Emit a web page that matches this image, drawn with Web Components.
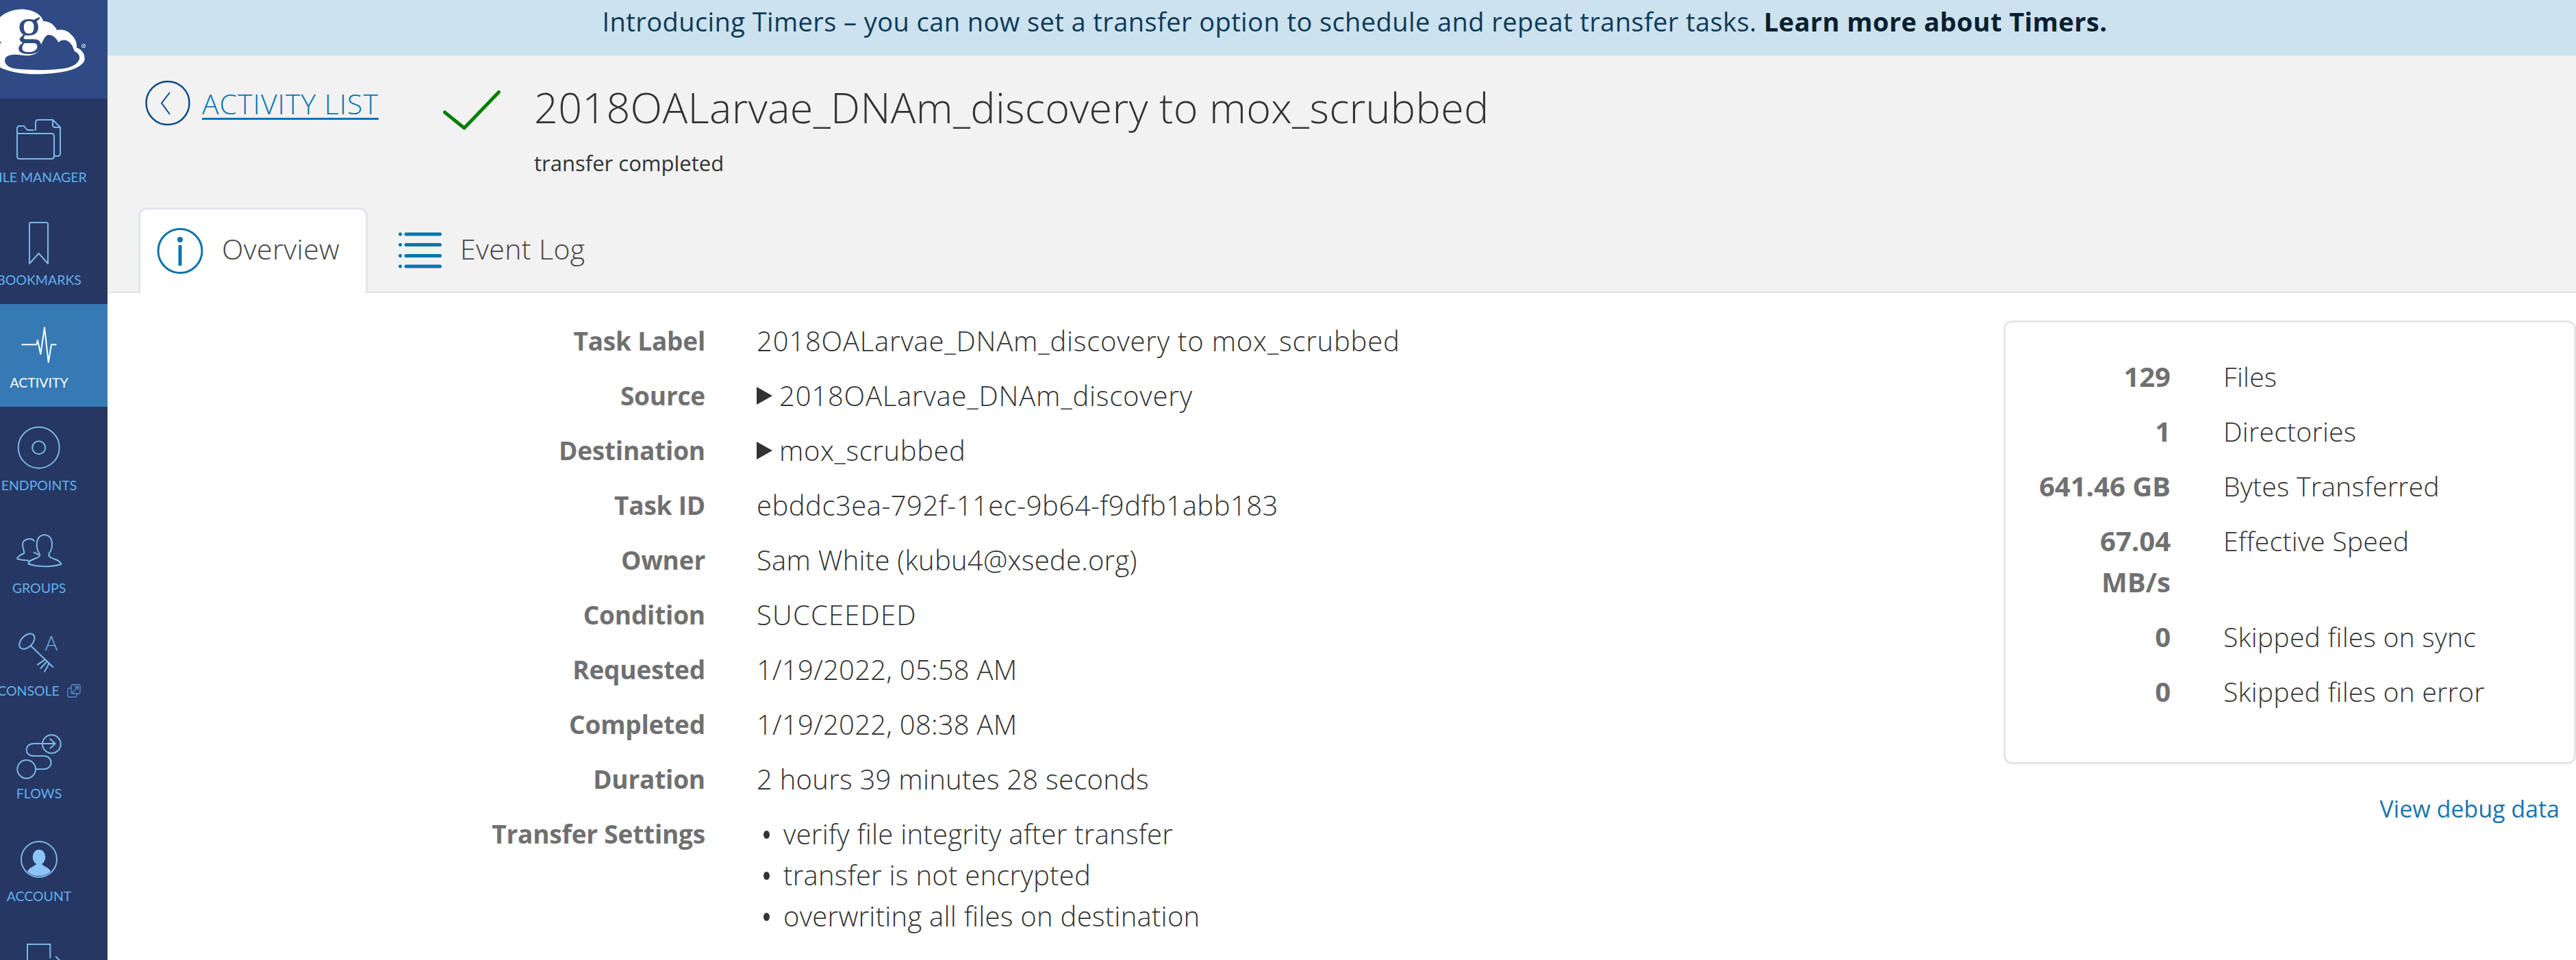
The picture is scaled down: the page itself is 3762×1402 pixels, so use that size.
<!DOCTYPE html>
<html lang="en">
<head>
<meta charset="utf-8">
<title>Activity</title>
<style>
  html, body { margin: 0; height: 100%; overflow: hidden; background: #fff; }
  body { font: 300 40px/60px "Open Sans", "Liberation Sans", sans-serif; letter-spacing: .25px; color: #333; }
  svg.ic { display: block; width: 80px; height: 80px; overflow: visible; fill: none; stroke: #7db8e8; stroke-width: 2; stroke-linecap: round; stroke-linejoin: round; }
  svg.ic .z { stroke-width: 6; }
</style>
</head>
<body>
<app-shell>
  <side-nav slot="nav">
    <nav-item label="FILE MANAGER">
      <svg class="ic" slot="icon" viewBox="0 0 80 80"><path d="M62,64 V35 q0,-4 -4,-4 H8 V64 q0,4 4,4 H58 q4,0 4,-4 M8,31 V24 q0,-4 4,-4 H18 l4,5 q1,1 3,1 H32 M35,26 V15 q0,-4 4,-4 H60 L71,22 V60 q0,4 -4,4 H62 M60,11 v7 q0,4 4,4 h7"/></svg>
    </nav-item>
    <nav-item label="BOOKMARKS">
      <svg class="ic" slot="icon" viewBox="0 0 80 80"><path d="M26,13 q0,-2 2,-2 h23 q2,0 2,2 V71 L39.5,56 L26,71 Z"/></svg>
    </nav-item>
    <nav-item label="ACTIVITY" active>
      <svg class="ic" slot="icon" viewBox="0 0 80 80" style="stroke:#fff"><path d="M15.3,39.3 H36.3 L38,33 L42.3,53 L48,14.3 L53.7,65 L58,39.3 H64.7"/></svg>
    </nav-item>
    <nav-item label="ENDPOINTS">
      <svg class="ic" slot="icon" viewBox="0 0 80 80"><circle cx="39.7" cy="39.7" r="30"/><circle cx="39.7" cy="39.7" r="9.5"/></svg>
    </nav-item>
    <nav-item label="GROUPS">
      <svg class="ic" slot="icon" viewBox="0 0 80 80"><g class="z" transform="translate(-17,-304) scale(.3333)"><path d="M172,1045 C155,1020 155,965 195,963 C235,965 235,1020 215,1045 C210,1060 225,1065 245,1072 C262,1078 265,1085 268,1092 C230,1105 160,1105 123,1090 C128,1075 145,1070 160,1065 C175,1060 178,1052 172,1045 Z"/><path d="M128,1076 C105,1075 88,1073 75,1068 C80,1055 90,1050 105,1045 C110,1035 95,1020 100,1000 C105,980 140,975 150,990 M148,1040 L168,1050"/></g></svg>
    </nav-item>
    <nav-item label="CONSOLE" external>
      <svg class="ic" slot="icon" viewBox="0 0 80 80"><g class="z" transform="translate(-17,-14) scale(.3333)"><ellipse cx="118" cy="110" rx="40" ry="25" transform="rotate(-45 118 110)"/><path d="M135,130 L232,222 M197,190 L165,212 M206,198 L178,228 M215,207 L195,243"/><text x="225" y="150" text-anchor="middle" font-family="Lato, sans-serif" font-weight="300" font-size="86" fill="#7db8e8" stroke="none">A</text></g></svg>
    </nav-item>
    <nav-item label="FLOWS">
      <svg class="ic" slot="icon" viewBox="0 0 80 80"><g class="z" transform="translate(-17,-124) scale(.3333)"><circle cx="226" cy="440" r="40"/><circle cx="116" cy="550" r="40"/><path d="M242,438 H148 C105,438 105,492 148,492 H190 C235,492 235,550 190,550 H158 M220,418 L242,438 L220,458"/></g></svg>
    </nav-item>
    <nav-item label="ACCOUNT">
      <svg class="ic" slot="icon" viewBox="0 0 80 80"><g class="z" transform="translate(-17,-274) scale(.3333)"><circle cx="171" cy="945" r="78"/><ellipse cx="171" cy="935" rx="28" ry="33" fill="#8cc4f5" stroke="none"/><path d="M120,999 C128,978 150,978 158,966 H184 C192,978 214,978 222,999 A78,78 0 0 1 120,999 Z" fill="#8cc4f5" stroke="none"/></g></svg>
    </nav-item>
    <nav-item>
      <svg class="ic" slot="icon" viewBox="0 0 80 80"><g class="z" transform="translate(-17,-24) scale(.3333)"><path d="M220,176 V117 H120 V300 H220 V250 M245,172 L290,215 L245,260 M290,215 H170"/></g></svg>
    </nav-item>
  </side-nav>

  <notice-banner>Introducing Timers – you can now set a transfer option to schedule and repeat transfer tasks. <b>Learn more about Timers.</b></notice-banner>

  <task-header>
    <span slot="back">ACTIVITY LIST</span>
    <span slot="title">2018OALarvae_DNAm_discovery to mox_scrubbed</span>
    <span slot="status">transfer completed</span>
    <tab-item slot="tabs" active>
      <svg slot="icon" width="68" height="67" viewBox="0 0 68 67" fill="none" stroke="#0a75ad" stroke-width="3"><circle cx="34" cy="33.500" r="32"/><path d="M34,25 V55" stroke-width="5"/><circle cx="34" cy="17" r="4" fill="#0a75ad" stroke="none"/></svg>
      Overview
    </tab-item>
    <tab-item slot="tabs">
      <svg slot="icon" width="63" height="54" viewBox="0 0 63 54" fill="none" stroke="#0a75ad" stroke-width="5" stroke-linecap="round"><path d="M11,3 H60.5 M11,18.500 H60.500 M11,34.500 H60.500 M11,50 H60.500"/><path d="M2.500,3 h.1 M2.500,18.500 h.1 M2.500,34.500 h.1 M2.500,50 h.1"/></svg>
      Event Log
    </tab-item>
  </task-header>

  <task-overview>
    <detail-row label="Task Label" style="letter-spacing:.8px">2018OALarvae_DNAm_discovery to mox_scrubbed</detail-row>
    <detail-row label="Source" style="letter-spacing:.8px"><endpoint-link>2018OALarvae_DNAm_discovery</endpoint-link></detail-row>
    <detail-row label="Destination" style="letter-spacing:.6px"><endpoint-link>mox_scrubbed</endpoint-link></detail-row>
    <detail-row label="Task ID" style="letter-spacing:.5px">ebddc3ea-792f-11ec-9b64-f9dfb1abb183</detail-row>
    <detail-row label="Owner">Sam White (kubu4@xsede.org)</detail-row>
    <detail-row label="Condition" style="letter-spacing:1.2px">SUCCEEDED</detail-row>
    <detail-row label="Requested">1/19/2022, 05:58 AM</detail-row>
    <detail-row label="Completed">1/19/2022, 08:38 AM</detail-row>
    <detail-row label="Duration">2 hours 39 minutes 28 seconds</detail-row>
    <detail-row label="Transfer Settings">
      <bullet-item>verify file integrity after transfer</bullet-item>
      <bullet-item>transfer is not encrypted</bullet-item>
      <bullet-item>overwriting all files on destination</bullet-item>
    </detail-row>

    <stats-card slot="stats">
      <stat-row value="129">Files</stat-row>
      <stat-row value="1">Directories</stat-row>
      <stat-row value="641.46 GB">Bytes Transferred</stat-row>
      <stat-row value="67.04 MB/s">Effective Speed</stat-row>
      <stat-row value="0">Skipped files on sync</stat-row>
      <stat-row value="0">Skipped files on error</stat-row>
    </stats-card>
    <span slot="debug">View debug data</span>
  </task-overview>
</app-shell>

<script>
const shadow = (el, html) => {
    el.attachShadow({ mode: 'open' }).innerHTML = html;
};

class AppShell extends HTMLElement {
    constructor() {
        super();
        shadow(this, `
<style>
  :host { display: flex; height: 100vh; overflow: hidden; }
  .main { flex: 1; min-width: 0; display: flex; flex-direction: column; }
</style>
<slot name="nav"></slot>
<div class="main"><slot></slot></div>`);
    }
}

class SideNav extends HTMLElement {
    constructor() {
        super();
        shadow(this, `
<style>
  :host { display: block; flex: 0 0 157px; background: #263763; overflow: hidden; }
  .logo { height: 144px; background: #2f4a85; }
  svg { display: block; overflow: hidden; }
</style>
<div class="logo">
  <svg width="130" height="120" viewBox="0 0 390 360">
    <path fill="#fff" d="M-10,85 C30,40 110,25 165,60 C178,70 186,80 190,93 C215,92 238,108 250,132 C270,128 295,132 310,150 C328,165 340,190 335,208 C360,218 375,240 370,265 C355,300 290,322 170,325 C100,326 30,315 -10,290 Z"/>
    <path fill="#2f4a85" d="M168,226 C180,200 190,160 210,153 C232,150 250,170 256,186 C270,170 298,173 310,192 C322,205 322,218 328,226 C358,238 360,278 300,296 C250,308 130,310 60,300 C25,292 15,270 25,252 C40,235 75,238 100,242 C130,246 150,242 168,226 Z"/>
    <path fill="#2f4a85" d="M-5,178 L6,186 L-5,196 Z"/>
    <text x="72" y="190" font-family="Liberation Serif, serif" font-weight="400" font-size="225" fill="#2f4a85">g</text>
    <circle cx="366" cy="201" r="8" fill="none" stroke="#fff" stroke-width="2.500"/>
    <circle cx="366" cy="201" r="3" fill="#fff"/>
  </svg>
</div>
<slot></slot>`);
    }
}

class NavItem extends HTMLElement {
    constructor() {
        super();
        const label = this.getAttribute('label');
        const external = this.hasAttribute('external') ? `
<svg class="ext" width="20" height="20" viewBox="0 0 20 20" fill="none" stroke="#5a90c8" stroke-width="1.300"><rect x="6" y="1" width="13" height="13" rx="1.500"/><path d="M6,6 H2.500 q-1.500,0 -1.500,1.500 V17.500 q0,1.500 1.500,1.500 H12.500 q1.500,0 1.500,-1.500 V14 M7,13 L16,4 M11,4 H16 V9"/></svg>` : '';
        shadow(this, `
<style>
  :host { display: block; height: 150px; padding-top: 20px; box-sizing: border-box; color: #62b0ef; }
  :host([active]) { background: #367ab5; color: #fff; }
  .box { width: 114px; display: flex; flex-direction: column; align-items: center; }
  .label { height: 30px; display: flex; align-items: center; gap: 11px; white-space: nowrap; letter-spacing: 0;
    font: 400 19.500px/30px Lato, "Open Sans", sans-serif; }
</style>
<div class="box">
  <slot name="icon"></slot>
  ${label ? `<div class="label">${label}${external}</div>` : ''}
</div>`);
    }
}

class NoticeBanner extends HTMLElement {
    constructor() {
        super();
        shadow(this, `
<style>
  :host { display: block; flex: 0 0 81px; box-sizing: border-box; background: #cce2ef; color: #0d3a58;
    padding: 3px 0 0 38px; text-align: center; line-height: 56px; font-size: 38px; letter-spacing: .42px; font-weight: 400; white-space: nowrap; }
  ::slotted(b) { font-weight: 700; color: #08202f; }
</style>
<slot></slot>`);
    }
}

class TaskHeader extends HTMLElement {
    constructor() {
        super();
        shadow(this, `
<style>
  :host { display: block; background: #f2f2f2; border-bottom: 2px solid #e2e2e2; }
  .top { height: 222px; box-sizing: border-box; padding: 36px 0 0 55px; display: flex; align-items: flex-start; }
  .back { flex: 0 0 435px; display: flex; align-items: center; gap: 17px; height: 67px;
    color: #0a75b5; font-size: 41px; letter-spacing: 1px; text-decoration: underline; text-decoration-thickness: 3px; text-underline-offset: 5px; }
  .check { flex: 0 0 84px; margin: 15px 49px 0 0; display: block; }
  .title { font-size: 61px; line-height: 76px; margin-top: 2px; letter-spacing: .33px; }
  .status { font-size: 31px; line-height: 44px; margin-top: 21px; letter-spacing: 0; font-weight: 400; }
  .tabs { display: flex; height: 123px; padding-left: 45px; }
</style>
<div class="top">
  <div class="back">
    <svg width="66" height="67" viewBox="0 0 66 67" fill="none" stroke="#0a4a8c" stroke-width="2.500"><circle cx="33" cy="33.500" r="31.500"/><path d="M36,18 L24,33.500 L36,50" stroke-width="2"/></svg>
    <slot name="back"></slot>
  </div>
  <svg class="check" width="84" height="58" viewBox="0 0 84 58" fill="none" stroke="#008000" stroke-width="5" stroke-linecap="round" stroke-linejoin="round"><path d="M2.500,32 L31,55 L81.500,2.500"/></svg>
  <div>
    <div class="title"><slot name="title"></slot></div>
    <div class="status"><slot name="status"></slot></div>
  </div>
</div>
<div class="tabs"><slot name="tabs"></slot></div>`);
    }
}

class TabItem extends HTMLElement {
    constructor() {
        super();
        shadow(this, `
<style>
  :host { display: flex; align-items: center; gap: 27px; box-sizing: border-box; height: 125px; padding: 0 45px 9px 0;
    margin-left: 42px; border: 3px solid transparent; border-bottom: 0; font-size: 41px; letter-spacing: .4px; color: #444; }
  :host([active]) { width: 335px; margin: 0; padding: 0 0 9px 24px; background: #fff;
    border-color: #e1e5ea; border-radius: 12px 12px 0 0; }
  ::slotted([slot=icon]) { margin-top: 7px; }
</style>
<slot name="icon"></slot><slot></slot>`);
    }
}

class TaskOverview extends HTMLElement {
    constructor() {
        super();
        shadow(this, `
<style>
  :host { display: flex; flex: 1; min-height: 0; }
  .rows { flex: 1; padding-top: 30px; }
  aside { flex: 0 0 836px; padding-top: 40px; }
  .debug { text-align: right; padding: 35px 24px 0 0; color: #1a75b0; font-size: 34px; letter-spacing: 0; font-weight: 400; }
</style>
<div class="rows"><slot></slot></div>
<aside>
  <slot name="stats"></slot>
  <div class="debug"><slot name="debug"></slot></div>
</aside>`);
    }
}

class DetailRow extends HTMLElement {
    constructor() {
        super();
        shadow(this, `
<style>
  :host { display: grid; grid-template-columns: 873px 1fr; column-gap: 75px; padding: 10px 0; }
  .label { text-align: right; font-weight: 700; color: #707070; font-size: 37px; letter-spacing: -.2px; white-space: nowrap; }
  .value { white-space: nowrap; }
</style>
<div class="label">${this.getAttribute('label')}</div>
<div class="value"><slot></slot></div>`);
    }
}

class EndpointLink extends HTMLElement {
    constructor() {
        super();
        shadow(this, `
<style>
  :host { display: flex; align-items: center; gap: 10px; }
  i { width: 0; height: 0; border-left: 23px solid #333; border-top: 13.500px solid transparent; border-bottom: 13.500px solid transparent; }
</style>
<i></i><slot></slot>`);
    }
}

class BulletItem extends HTMLElement {
    constructor() {
        super();
        shadow(this, `
<style>
  :host { display: flex; align-items: center; padding-left: 10px; gap: 20px; }
  i { width: 9px; height: 12px; border-radius: 50%; background: #333; margin-top: 2px; }
</style>
<i></i><slot></slot>`);
    }
}

class StatsCard extends HTMLElement {
    constructor() {
        super();
        shadow(this, `
<style>
  :host { display: block; box-sizing: border-box; height: 648px; padding: 39px 0 0 45px; background: #fff;
    border: 3px solid #e5e5e5; border-radius: 12px; }
</style>
<slot></slot>`);
    }
}

class StatRow extends HTMLElement {
    constructor() {
        super();
        shadow(this, `
<style>
  :host { display: grid; grid-template-columns: 196px 1fr; column-gap: 77px; padding: 10px 0; font-size: 39px; letter-spacing: .3px; }
  .num { text-align: right; font-weight: 700; color: #707070; font-size: 40px; letter-spacing: 0; }
</style>
<div class="num">${this.getAttribute('value')}</div>
<div><slot></slot></div>`);
    }
}

customElements.define('app-shell', AppShell);
customElements.define('side-nav', SideNav);
customElements.define('nav-item', NavItem);
customElements.define('notice-banner', NoticeBanner);
customElements.define('task-header', TaskHeader);
customElements.define('tab-item', TabItem);
customElements.define('task-overview', TaskOverview);
customElements.define('detail-row', DetailRow);
customElements.define('endpoint-link', EndpointLink);
customElements.define('bullet-item', BulletItem);
customElements.define('stats-card', StatsCard);
customElements.define('stat-row', StatRow);
</script>
</body>
</html>
